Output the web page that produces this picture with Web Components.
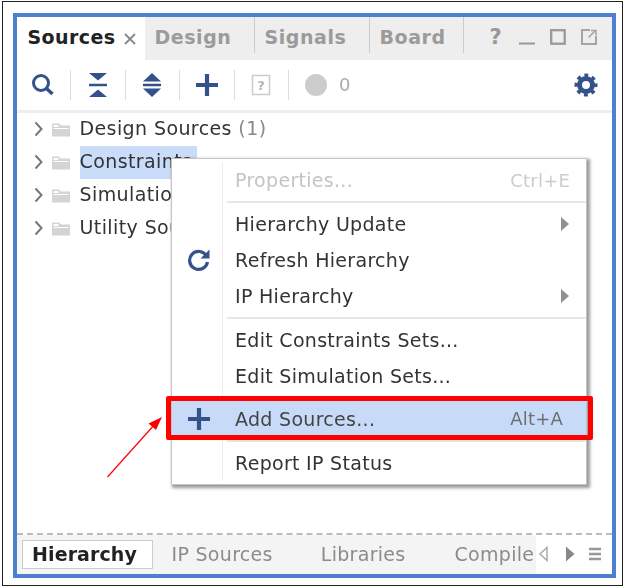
<!DOCTYPE html>
<html><head><meta charset="utf-8">
<style>
html,body{margin:0;background:#fff}
body{width:628px;height:588px;overflow:hidden;font-family:"DejaVu Sans",sans-serif}
</style></head><body>
<vivado-panel>
  <panel-tabs slot="tabs"></panel-tabs>
  <panel-toolbar slot="toolbar"></panel-toolbar>
  <source-tree slot="tree">
    <tree-row>Design Sources <span style="color:#888">(1)</span></tree-row>
    <tree-row selected>Constraints</tree-row>
    <tree-row>Simulation Sources</tree-row>
    <tree-row>Utility Sources</tree-row>
  </source-tree>
  <bottom-tabs slot="bottom"></bottom-tabs>
</vivado-panel>
<context-menu></context-menu>
<call-out></call-out>
<script>
function def(name,html,init){customElements.define(name,class extends HTMLElement{constructor(){super();this.attachShadow({mode:'open'}).innerHTML=html;}connectedCallback(){init&&init(this)}})}
const BLUE='#34528a';
def('vivado-panel',`<style>
:host{display:block;position:absolute;inset:1px 5.5px 2px 2px;border:1.5px solid #222;box-sizing:border-box;padding:10.5px 5.5px 7.5px 9.5px;filter:blur(.35px)}
.f{border:4px solid #4f7fcf;height:100%;box-sizing:border-box;display:flex;flex-direction:column}
.t{flex:1;min-height:0}
</style><div class="f"><slot name="tabs"></slot><slot name="toolbar"></slot><div class="t"><slot name="tree"></slot></div><slot name="bottom"></slot></div>`);
def('panel-tabs',`<style>
:host{display:flex;height:43px;background:#eee;color:#9b9b9b;font:bold 19px "DejaVu Sans",sans-serif;flex:none}
.tab{display:flex;align-items:center;height:36px;padding:4px 0 0 10px;box-sizing:border-box;border-right:1.5px solid #ccc;letter-spacing:.55px}
.a{width:128px;height:43px;background:#fff;color:#222;border:0;padding:0 0 3px 11px;letter-spacing:.4px}
.a svg{margin-left:9px;margin-top:5px}
.w1{width:110px}.w2{width:115px}.w3{width:94px}
.c{flex:1;display:flex;align-items:center;height:36px;padding-top:4px;box-sizing:border-box}
.c b{font:bold 21px "DejaVu Sans",sans-serif;margin-left:26px;width:28px;color:#999}
.c svg{margin-right:13px}
</style>
<div class="tab a">Sources<svg width="12" height="12" viewBox="0 0 12 12"><path d="M1 1l10 10M11 1L1 11" stroke="#888" stroke-width="1.8"/></svg></div>
<div class="tab w1">Design</div><div class="tab w2">Signals</div><div class="tab w3">Board</div>
<div class="c"><b>?</b><svg width="18" height="18" viewBox="0 0 18 18"><path d="M1 15.5h16" stroke="#999" stroke-width="2"/></svg><svg width="18" height="18" viewBox="0 0 18 18"><rect x="2.2" y="2.2" width="13.5" height="13.5" fill="none" stroke="#999" stroke-width="2.3"/></svg><svg width="18" height="18" viewBox="0 0 18 18"><path d="M10 2H2v14h14V8" fill="none" stroke="#a5a5a5" stroke-width="2"/><path d="M8.500 9.500L15 3M11 2.500h5v5" fill="none" stroke="#a5a5a5" stroke-width="1.600"/></svg></div>`);
def('panel-toolbar',`<style>
:host{display:flex;align-items:center;height:50px;flex:none;border-bottom:3px solid #eee;color:#aaa;font:18px "DejaVu Sans",sans-serif}
.s{width:54px;height:30px;display:flex;align-items:center;justify-content:center;border-right:1.5px solid #ddd;flex:none;margin-right:-.5px}
.s1{width:53.500px}
.z{flex:1}
.n{margin-left:13px}
.g{margin-right:14px;display:block}
.s.l{border:0;width:auto;margin-left:16px}
</style>
<div class="s s1"><svg width="26" height="26" viewBox="0 0 26 26"><circle cx="11" cy="11" r="7.500" fill="none" stroke="${BLUE}" stroke-width="3"/><path d="M16.500 16.500l6 5.500" stroke="${BLUE}" stroke-width="3.500"/></svg></div>
<div class="s"><svg width="22" height="26" viewBox="0 0 22 26"><path d="M2 1h18l-9 7.500zM2 25h18l-9-7.500z" fill="${BLUE}"/><path d="M2 13h18" stroke="${BLUE}" stroke-width="2.500"/></svg></div>
<div class="s"><svg width="22" height="26" viewBox="0 0 22 26"><path d="M2 9.500L11 1l9 8.500zM2 16.500h18L11 25z" fill="${BLUE}"/><path d="M2 13h18" stroke="${BLUE}" stroke-width="2.500"/></svg></div>
<div class="s"><svg width="24" height="24" viewBox="0 0 24 24"><path d="M1 12h22M12 1v22" stroke="${BLUE}" stroke-width="4.200"/></svg></div>
<div class="s"><svg width="22" height="24" viewBox="0 0 22 24"><path d="M2.500 2.500h17v19h-17z" fill="none" stroke="#ccc" stroke-width="1.500"/><text x="11" y="17" text-anchor="middle" font-family="DejaVu Sans" font-weight="bold" font-size="13" fill="#b5b5b5">?</text></svg></div>
<div class="s l"><svg width="22" height="22" viewBox="0 0 22 22"><circle cx="11" cy="11" r="11" fill="#ccc"/></svg></div>
<span class="n">0</span><span class="z"></span>
<svg class="g" width="24" height="24" viewBox="0 0 24 24"><circle cx="12" cy="12" r="6.500" fill="none" stroke="${BLUE}" stroke-width="5"/><circle cx="12" cy="12" r="9.500" fill="none" stroke="${BLUE}" stroke-width="4" stroke-dasharray="3.730 3.730" stroke-dashoffset="1.860"/></svg>`);
def('source-tree',`<style>:host{display:block}</style><slot></slot>`);
def('tree-row',`<style>
:host{display:flex;align-items:center;height:33px;font:19px "DejaVu Sans",sans-serif;color:#333;letter-spacing:.4px;padding-left:17px;white-space:nowrap}
svg{flex:none}.c{margin-right:9px}.f{margin-right:10px}
.x{height:33px;line-height:31px}
:host([selected]) .x{background:#c9dcfa;width:117px;overflow:hidden}
</style>
<svg class="c" width="9" height="16" viewBox="0 0 9 16"><path d="M1.500 1.500L7.500 8l-6 6.500" fill="none" stroke="#777" stroke-width="2"/></svg>
<svg class="f" width="18" height="15" viewBox="0 0 18 15"><path d="M0 1.500h7l2 2h9v11H0z" fill="#d4d4d4"/><path d="M1.500 3h5v2h-5zM1.500 6h15v1h-15z" fill="#fff"/></svg>
<span class="x"><slot></slot></span>`);
def('bottom-tabs',`<style>
:host{display:flex;align-items:center;height:41px;flex:none;border-top:2px dashed #bbb;box-sizing:border-box;font:19px "DejaVu Sans",sans-serif;color:#8b8b8b;letter-spacing:.3px}
.bar{display:flex;align-items:center;background:#f4f4f4;width:519px;height:100%;padding-left:5px;box-sizing:border-box;white-space:nowrap;flex:none}
.a{width:131px;height:29px;box-sizing:border-box;border:1.500px solid #ccc;background:#fff;color:#222;font-weight:bold;display:flex;align-items:center;justify-content:center;flex:none;margin-right:19px;padding-right:5px;letter-spacing:.1px}
.i{margin-right:48px;flex:none}
svg{flex:none}
</style>
<div class="bar"><div class="a">Hierarchy</div><span class="i">IP Sources</span><span class="i">Libraries</span><span class="i" style="margin:0 0 0 1px">Compile</span></div>
<svg width="12" height="18" viewBox="0 0 12 18" style="margin-left:2px"><path d="M9 2.500v13L2 9z" fill="none" stroke="#aaa" stroke-width="1.500"/></svg>
<svg width="12" height="18" viewBox="0 0 12 18" style="margin-left:14px"><path d="M2 1.500v15L10.500 9z" fill="#888"/></svg>
<svg width="14" height="18" viewBox="0 0 14 18" style="margin-left:12px"><path d="M1 3h12M1 8h12M1 13h12" stroke="#999" stroke-width="2.400" transform="translate(0 1)"/></svg>`);
def('context-menu',`<style>
:host{display:block;position:absolute;left:171px;top:158px;width:416px;height:327px;box-sizing:border-box;background:#fff;border:1px solid #c4c4c4;box-shadow:2px 2px 3px 1px rgba(0,0,0,.4);padding:3px 0;font:19px "DejaVu Sans",sans-serif;color:#333;filter:blur(.35px)}
.gut{position:absolute;left:49.500px;top:3px;bottom:3px;width:1.500px;background:#eee}
</style><div class="gut"></div>
<menu-item disabled short="Ctrl+E">Properties...</menu-item>
<menu-sep></menu-sep>
<menu-item arrow>Hierarchy Update</menu-item>
<menu-item icon="refresh">Refresh Hierarchy</menu-item>
<menu-item arrow>IP Hierarchy</menu-item>
<menu-sep></menu-sep>
<menu-item>Edit Constraints Sets...</menu-item>
<menu-item>Edit Simulation Sets...</menu-item>
<menu-sep style="height:7px"></menu-sep>
<menu-item icon="plus" short="Alt+A" hot>Add Sources...</menu-item>
<menu-sep></menu-sep>
<menu-item>Report IP Status</menu-item>`);
def('menu-sep',`<style>:host{display:flex;align-items:center;height:8px;padding-left:55px}i{display:block;flex:1;height:1.500px;background:#e6e6e6}</style><i></i>`);
customElements.define('menu-item',class extends HTMLElement{constructor(){super();
const s=this.attachShadow({mode:'open'});
const ic=this.getAttribute('icon');
const svg=ic=='refresh'?`<svg width="26" height="26" viewBox="0 0 26 26" style="margin:-3px 0 0 0"><path d="M20.500 10A9 9 0 1 0 21.500 16" fill="none" stroke="${BLUE}" stroke-width="3.200"/><path d="M23.500 3.500v9h-9z" fill="${BLUE}"/></svg>`:ic=='plus'?`<svg width="24" height="24" viewBox="0 0 24 24"><path d="M1 12h22M12 1v22" stroke="${BLUE}" stroke-width="4.200"/></svg>`:'';
const sh=this.getAttribute('short')||'';
s.innerHTML=`<style>
:host{display:flex;align-items:center;height:36px;letter-spacing:.3px;white-space:nowrap;position:relative}
:host([hot]){background:#c7dbf9;height:35px;margin-bottom:1px;color:#444}
:host([disabled]){color:#c4c4c4}
.i{width:54px;display:flex;justify-content:center;flex:none}
.t{flex:1;padding-left:9px}
.s{margin-right:23px;color:#6f6f6f;font-size:18px;letter-spacing:.2px}
:host([disabled]) .s{color:#ccc;margin-right:16px}
.a{margin-right:17px}
</style><span class="i">${svg}</span><span class="t"><slot></slot></span>${sh?`<span class="s">${sh}</span>`:''}${this.hasAttribute('arrow')?`<svg class="a" width="8" height="14" viewBox="0 0 8 14"><path d="M0 0l8 7-8 7z" fill="#909090"/></svg>`:''}`;
}});
def('call-out',`<style>
:host{display:block;position:absolute;inset:0;pointer-events:none}
.r{position:absolute;left:166px;top:396px;width:427px;height:44px;box-sizing:border-box;border:5px solid #f00;border-radius:2px}
svg{position:absolute;left:0;top:0}
</style><div class="r"></div>
<svg width="628" height="588" viewBox="0 0 628 588"><path d="M107.500 477L155 424" stroke="#f00" stroke-width="1.200"/><path d="M162 417l-13.500 6.500 7.500 6.500z" fill="#f00"/></svg>`);
</script>
</body></html>
